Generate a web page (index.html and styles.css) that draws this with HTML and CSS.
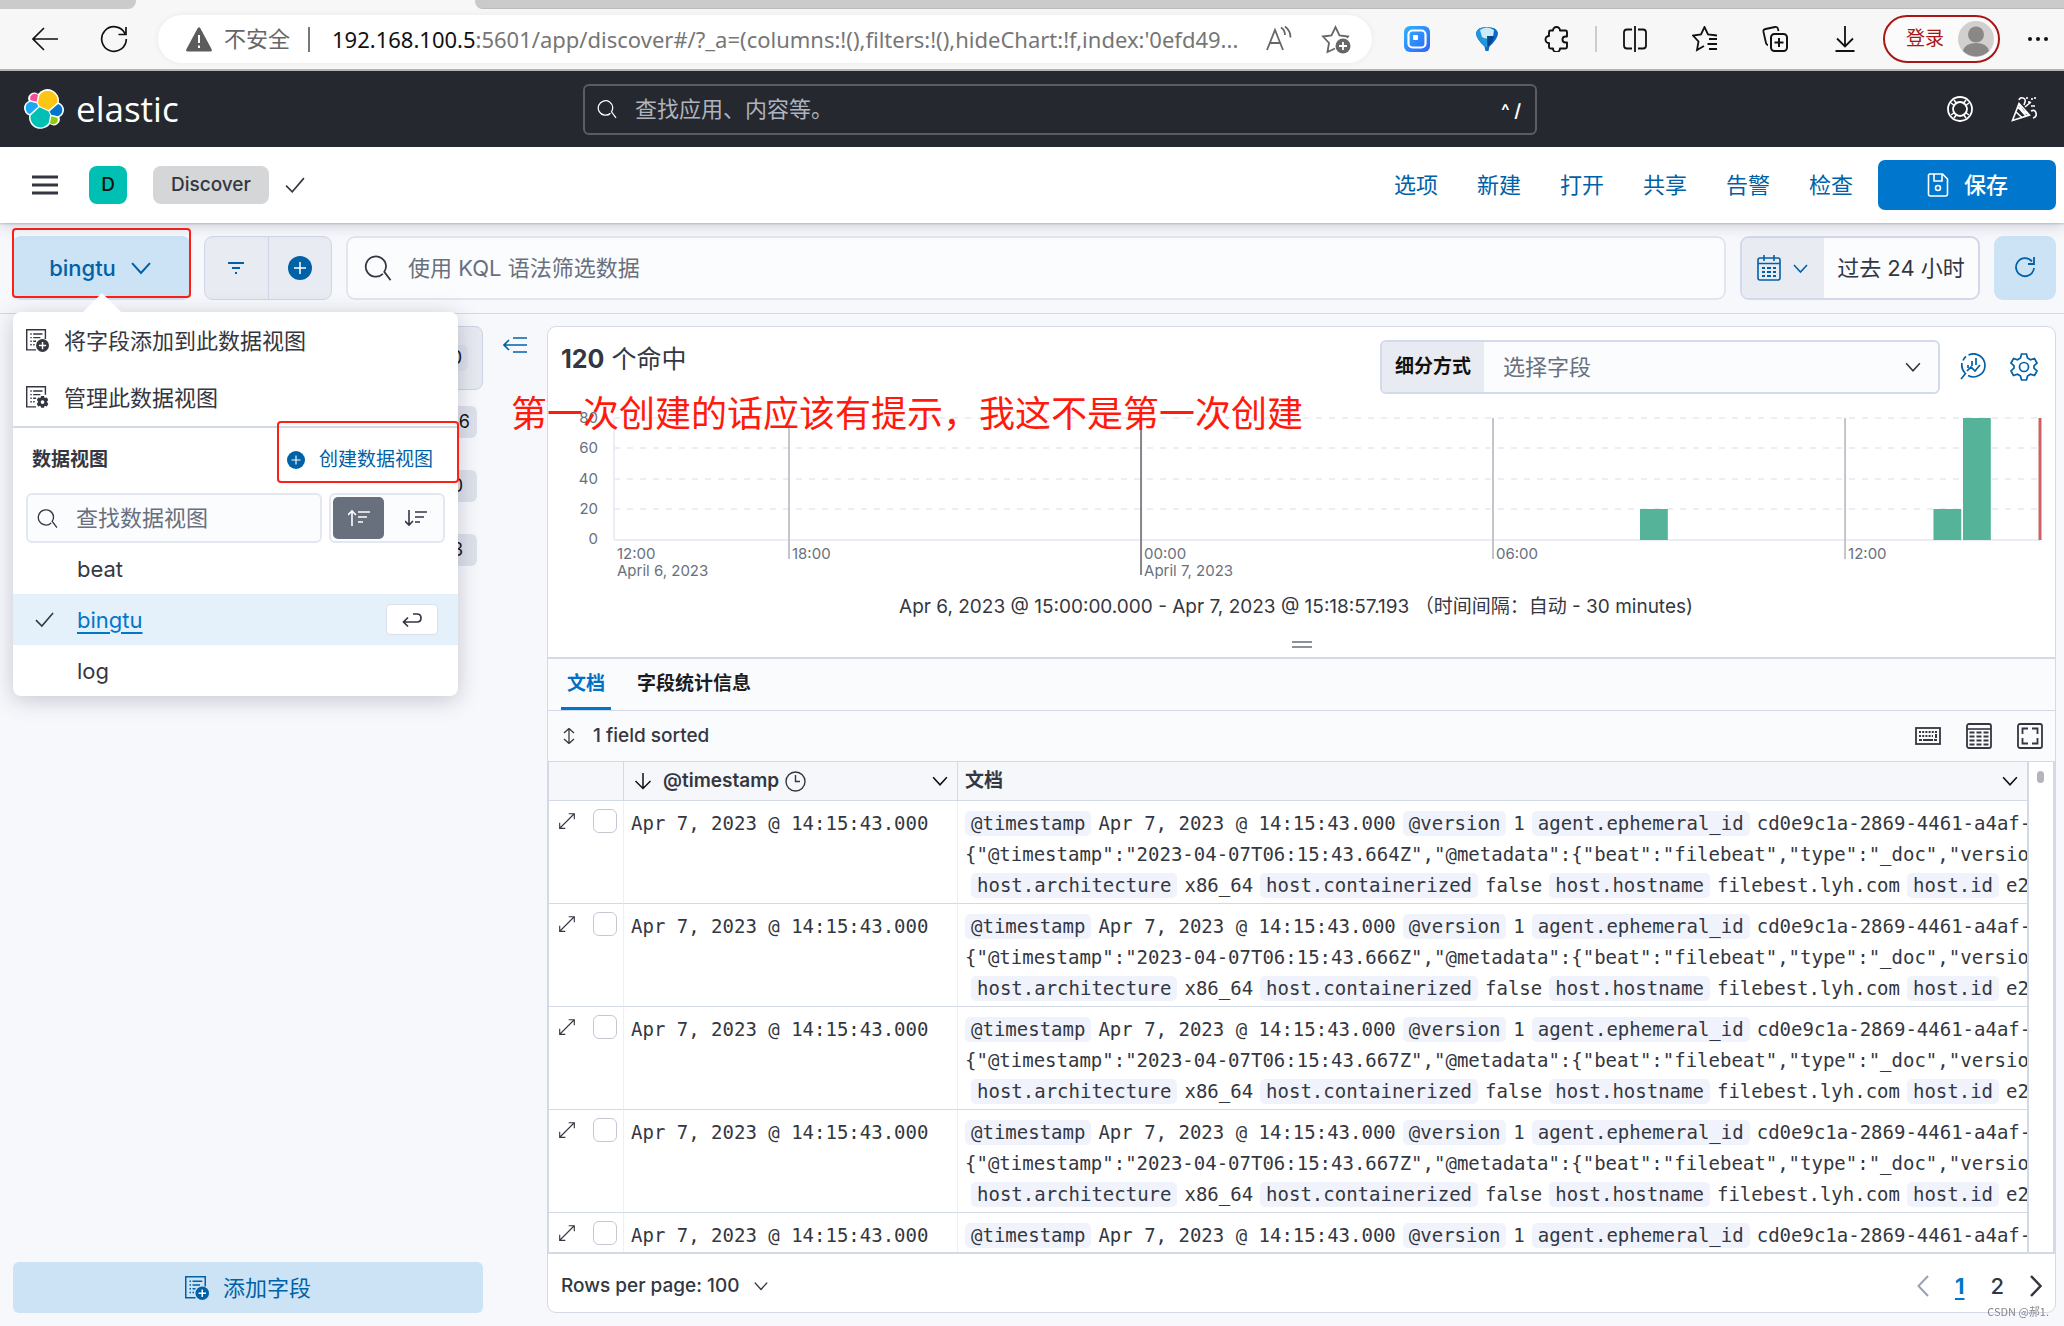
FILE: index.html
```html
<!DOCTYPE html>
<html lang="zh-CN">
<head>
<meta charset="utf-8">
<title>Discover - Elastic</title>
<link rel="stylesheet" href="styles.css">
</head>
<body>
<svg class="sprite" aria-hidden="true">
  <defs>
    <symbol id="i-search" viewBox="0 0 16 16"><path d="M10.8 11.4A5.8 5.8 0 1 1 12.6 6.8a6 6 0 0 1-1 3.4L15.2 15" fill="none" stroke="currentColor"/></symbol>
    <symbol id="i-down" viewBox="0 0 16 16"><path d="M2.5 5l5.5 6 5.5-6" fill="none" stroke="currentColor" stroke-width="1.3"/></symbol>
    <symbol id="i-check" viewBox="0 0 16 16"><path d="M1.5 8.5l4.5 4.5L14.5 3" fill="none" stroke="currentColor" stroke-width="1.2"/></symbol>
    <symbol id="i-plus" viewBox="0 0 16 16"><circle cx="8" cy="8" r="8" fill="currentColor"/><path d="M8 4v8M4 8h8" stroke="#fff" fill="none"/></symbol>
    <symbol id="i-indexadd" viewBox="0 0 16 16"><path d="M7 14.5H.5V.5h13V7M3 3.5h1M5 3.5h6.500M3 6h1M5 6h5M3 8.500h1M5 8.500h2M3 11h1M5 11h1" fill="none" stroke="currentColor"/><circle cx="11.500" cy="11.500" r="4.500" fill="currentColor"/><path d="M11.500 9v5M9 11.500h5" stroke="#fff" fill="none"/></symbol>
    <symbol id="i-indexset" viewBox="0 0 16 16"><path d="M7 14.500H.5V.5h13V6M3 3.500h1M5 3.500h6.500M3 6h1M5 6h5M3 8.500h1M5 8.500h2M3 11h1M5 11h1" fill="none" stroke="currentColor"/><path d="M10.500 7h2l.5 1.400 1.500-.4 1 1.700-1 1.300 1 1.500-1 1.700-1.500-.4-.5 1.400h-2l-.5-1.400-1.500.4-1-1.700 1-1.500-1-1.300 1-1.700 1.500.4z" fill="currentColor"/><circle cx="11.500" cy="11.200" r="1.300" fill="#fff"/></symbol>
    <symbol id="i-expand" viewBox="0 0 16 16"><path d="M2 14L14 2M9.500 1.500h5v5M1.500 9.500v5h5" fill="none" stroke="currentColor"/></symbol>
  </defs>
</svg>

<header class="browser">
  <div class="tabstrip"><span class="tab-left"></span><span class="tab-active"></span><span class="tab-right"></span></div>
  <div class="toolbar">
    <button class="tool" aria-label="后退"><svg width="26" height="26" viewBox="0 0 26 26"><path d="M26 13H1M12 2L1 13l11 11" fill="none" stroke="#111" stroke-width="1.600"/></svg></button>
    <button class="tool" aria-label="刷新"><svg width="28" height="28" viewBox="0 0 28 28"><path d="M25 8.500A12.300 12.300 0 1 0 26.300 14M26 2v7.500h-7.500" fill="none" stroke="#111" stroke-width="1.700"/></svg></button>
    <div class="address">
      <svg width="26" height="25" viewBox="0 0 26 25"><path d="M11.500 1.500q1.500-2.500 3 0L25.500 22q1 2.500-1.500 2.500H2Q-.5 24.500.5 22z" fill="#5c5c5c"/><path d="M13 8v8M13 18.500v2.500" stroke="#fff" stroke-width="2"/></svg>
      <span class="insecure">不安全</span>
      <span class="addr-sep"></span>
      <span class="url"><b>192.168.100.5</b>:5601/app/discover#/?_a=(columns:!(),filters:!(),hideChart:!f,index:'0efd49...</span>
      <button class="tool" aria-label="大声朗读"><svg width="26" height="26" viewBox="0 0 26 26" fill="none" stroke="#666" stroke-width="1.800"><path d="M1 24L9 4l8 20M4 17h10M15 1.500q4 2.500 4 7.500M19 .5q5.500 4 5.500 11"/></svg></button>
      <button class="tool" aria-label="添加到收藏夹"><svg width="30" height="30" viewBox="0 0 30 30"><path d="M14 24.500L6.500 28l1.500-9L2 12.500l8.500-1L14.500 3l4 8.500 8.500 1-1 1.500" fill="none" stroke="#666" stroke-width="1.800"/><circle cx="22" cy="22" r="7.500" fill="#666"/><path d="M22 18v8M18 22h8" stroke="#fff" stroke-width="1.800"/></svg></button>
    </div>
    <div class="tools">
      <button class="tool" aria-label="侧边扩展"><svg width="26" height="26" viewBox="0 0 26 26"><defs><linearGradient id="g-side" x1="0" y1="0" x2="1" y2="1"><stop offset="0" stop-color="#30b4fa"/><stop offset="1" stop-color="#2f62fb"/></linearGradient></defs><rect width="26" height="26" rx="6" fill="url(#g-side)"/><rect x="4.500" y="4.500" width="17" height="17" rx="4" fill="none" stroke="#fff" stroke-width="2.200"/><rect x="9" y="9" width="5" height="5" rx="1" fill="#fff"/></svg></button>
      <button class="tool" aria-label="下载扩展"><svg width="26" height="26" viewBox="0 0 26 26"><path d="M2 7q1-6 11-6t11 6q0 6-8.500 13.500L14.500 25h-3l-1-4.500Q2 13 2 7z" fill="#0a6ac4"/><path d="M2 7q1-6 11-6v21Q2 13 2 7z" fill="#1f97dd"/><path d="M6 4q7-5 14 0l-1 7q-6 3-11 0z" fill="#c9ecf8"/><path d="M13 10h7q-1 6-6 11z" fill="#06478f"/></svg></button>
      <button class="tool" aria-label="扩展"><svg width="26" height="26" viewBox="0 0 26 26"><path d="M9 4.500a3.500 3.500 0 0 1 7 0h5.500a1.500 1.500 0 0 1 1.500 1.500v4.500h-1.500a3 3 0 0 0 0 6H23V21a1.500 1.500 0 0 1-1.500 1.500H16a3.500 3.500 0 0 1-7 0H6.500A1.500 1.500 0 0 1 5 21v-4a3.500 3.500 0 0 1 0-7V6a1.500 1.500 0 0 1 1.500-1.500z" fill="none" stroke="#111" stroke-width="1.900" stroke-linejoin="round"/></svg></button>
      <span class="tools-sep"></span>
      <button class="tool" aria-label="分屏"><svg width="26" height="26" viewBox="0 0 26 26"><path d="M10 3.500H5a3 3 0 0 0-3 3v13a3 3 0 0 0 3 3h5M16 3.500h5a3 3 0 0 1 3 3v13a3 3 0 0 1-3 3h-5M13 0v26" fill="none" stroke="#111" stroke-width="1.800"/></svg></button>
      <button class="tool" aria-label="收藏夹"><svg width="26" height="26" viewBox="0 0 26 26"><path d="M12 20l-7 4 1.500-8.500L1 9.500l8-1L12.500 1 16 8.500l9 1M17 13h8M15.500 18H25M17 23h8" fill="none" stroke="#111" stroke-width="1.800"/></svg></button>
      <button class="tool" aria-label="集锦"><svg width="26" height="26" viewBox="0 0 26 26"><path d="M6 19Q4.500 19 4 17L1.500 6Q1 3.500 3.500 3L13 1q2.500-.5 3 2l.5 2" fill="none" stroke="#111" stroke-width="1.800"/><rect x="9" y="8" width="16" height="17" rx="3.500" fill="none" stroke="#111" stroke-width="2"/><path d="M17 12v9M12.500 16.500h9" stroke="#111" stroke-width="2"/></svg></button>
      <button class="tool" aria-label="下载"><svg width="26" height="26" viewBox="0 0 26 26"><path d="M13 0v20M5 12.500l8 8 8-8M3.500 25h19" fill="none" stroke="#111" stroke-width="1.800"/></svg></button>
    </div>
    <button class="login">登录<svg width="36" height="36" viewBox="0 0 36 36"><circle cx="18" cy="18" r="18" fill="#d2d0ce"/><circle cx="18" cy="13.500" r="8" fill="#8a8886"/><path d="M5 30q2-8 13-8t13 8a18 18 0 0 1-26 0z" fill="#8a8886"/></svg></button>
    <button class="tool" aria-label="更多"><svg width="22" height="6" viewBox="0 0 22 6"><circle cx="3" cy="3" r="2" fill="#111"/><circle cx="11" cy="3" r="2" fill="#111"/><circle cx="19" cy="3" r="2" fill="#111"/></svg></button>
  </div>
</header>

<header class="topbar">
  <a class="brand" href="#" aria-label="elastic">
    <svg width="40" height="40" viewBox="0 0 32 32"><path fill="#fff" d="M32 16.770a6.334 6.334 0 0 0-1.140-3.630 6.269 6.269 0 0 0-3.020-2.300 9.098 9.098 0 0 0-.87-5.830A9.050 9.050 0 0 0 22.640 1a8.990 8.990 0 0 0-11.460 2.900 4.794 4.794 0 0 0-5.850-.05 4.833 4.833 0 0 0-1.620 5.650 6.356 6.356 0 0 0-2.690 2.340A6.395 6.395 0 0 0 0 15.260a6.349 6.349 0 0 0 1.150 3.650 6.283 6.283 0 0 0 3.040 2.300 9.039 9.039 0 0 0 10.900 10.430 8.984 8.984 0 0 0 5.740-3.550 4.770 4.770 0 0 0 5.840.04 4.808 4.808 0 0 0 1.610-5.640 6.357 6.357 0 0 0 2.700-2.340A6.396 6.396 0 0 0 32 16.770"/><path fill="#FEC514" d="M12.580 13.790l7 3.210 7.060-6.210a7.849 7.849 0 0 0-4.850-8.850 7.790 7.790 0 0 0-9.520 3.170L11.100 11.200z"/><path fill="#00BFB3" d="M5.340 21.200a7.986 7.986 0 0 0 4.880 8.950 7.770 7.770 0 0 0 9.580-3.230l1.160-6.090-1.560-3-7.020-3.210z"/><path fill="#F04E98" d="M5.300 9.060l4.790 1.140 1.050-5.480a3.790 3.790 0 0 0-5.960 1.270 3.820 3.820 0 0 0 .12 3.070"/><path fill="#1BA9F5" d="M4.880 10.210A5.380 5.380 0 0 0 1.340 15.170a5.270 5.270 0 0 0 3.370 4.900l6.730-6.110-1.240-2.650z"/><path fill="#93C90E" d="M20.850 27.260a3.780 3.780 0 0 0 5.940-1.270 3.820 3.820 0 0 0-.12-3.060l-4.780-1.130z"/><path fill="#07C" d="M21.850 20.570l5.260 1.240a5.380 5.380 0 0 0 3.550-4.960 5.270 5.270 0 0 0-3.380-4.890l-6.880 6.050z"/></svg>
    <span>elastic</span>
  </a>
  <label class="global-search"><svg width="20" height="20"><use href="#i-search"/></svg><input type="text" placeholder="查找应用、内容等。" aria-label="查找应用、内容等"><kbd>^ /</kbd></label>
  <div class="top-actions">
    <button class="tool" aria-label="帮助"><svg width="26" height="26" viewBox="0 0 26 26" fill="none" stroke="#fff"><circle cx="13" cy="13" r="12" stroke-width="1.800"/><circle cx="13" cy="13" r="7" stroke-width="1.800"/><path d="M4 7l4 3M7 4l3 4M19 4l-3 4M22 7l-4 3M4 19l4-3M7 22l3-4M19 22l-3-4M22 19l-4-3" stroke-width="1.500"/></svg></button>
    <button class="tool" aria-label="新闻"><svg width="26" height="26" viewBox="0 0 26 26" fill="none" stroke="#fff" stroke-width="1.600"><path d="M8 7.500L1.500 24.500 18.500 19zM5 16l6 5.500M7 11l8 9M8 7.500q2 8 10.500 11.500M8 4q1-3 4-2t2 4l-1 3M14 11l6-5M20 15q4-2 5 2t-3 5M16 1v2M21 2v2M24 1v2M18 5v2M20 10h4" /></svg></button>
  </div>
</header>

<nav class="appbar">
  <button class="tool" aria-label="菜单"><svg width="26" height="20" viewBox="0 0 26 20"><path d="M0 2h26M0 10h26M0 18h26" stroke="#343741" stroke-width="3"/></svg></button>
  <span class="space">D</span>
  <span class="crumb">Discover</span>
  <svg class="crumb-check" width="22" height="22"><use href="#i-check"/></svg>
  <div class="menu">
    <a href="#">选项</a><a href="#">新建</a><a href="#">打开</a><a href="#">共享</a><a href="#">告警</a><a href="#">检查</a>
  </div>
  <button class="save"><svg width="24" height="24" viewBox="0 0 24 24" fill="none" stroke="#fff" stroke-width="1.600"><path d="M3.500 1h13l5 5v15q0 2-2 2h-15q-2 0-2-2V2zM8 1v7h8V1"/><circle cx="12" cy="15" r="2.500"/></svg>保存</button>
</nav>

<section class="querybar">
  <div class="dataview">
    <button class="dataview-btn">bingtu<svg width="26" height="26"><use href="#i-down"/></svg></button>
    <span class="mark mark-button"></span>
    <div class="popover">
      <button class="pop-item"><svg width="23" height="23"><use href="#i-indexadd"/></svg>将字段添加到此数据视图</button>
      <button class="pop-item"><svg width="23" height="23"><use href="#i-indexset"/></svg>管理此数据视图</button>
      <div class="pop-head">
        <strong>数据视图</strong>
        <a href="#"><svg width="18" height="18"><use href="#i-plus"/></svg>创建数据视图</a>
        <span class="mark mark-create"></span>
      </div>
      <div class="pop-search">
        <label><svg width="21" height="21"><use href="#i-search"/></svg><input type="text" placeholder="查找数据视图" aria-label="查找数据视图"></label>
        <div class="sort">
          <button class="on" aria-label="升序"><svg width="22" height="18" viewBox="0 0 22 18" fill="none" stroke="currentColor" stroke-width="1.600"><path d="M4 17V2M0 6l4-4 4 4M10 3h12M10 8h9M10 13h5"/></svg></button>
          <button aria-label="降序"><svg width="22" height="18" viewBox="0 0 22 18" fill="none" stroke="currentColor" stroke-width="1.600"><path d="M4 1v15M0 12l4 4 4-4M10 3h12M10 8h9M10 13h5"/></svg></button>
        </div>
      </div>
      <ul class="views">
        <li>beat</li>
        <li class="selected"><svg width="21" height="21"><use href="#i-check"/></svg><a href="#">bingtu</a><span class="enter"><svg width="20" height="16" viewBox="0 0 20 16" fill="none" stroke="#343741" stroke-width="1.700"><path d="M11 2h4q4 0 4 4t-4 4H2M6 5.500L1.500 10 6 14.500"/></svg></span></li>
        <li>log</li>
      </ul>
    </div>
  </div>
  <div class="filters">
    <button aria-label="筛选"><svg width="18" height="14" viewBox="0 0 18 14"><path d="M1 2h16M5 7h8M8 12h2" stroke="#0061a6" stroke-width="2"/></svg></button>
    <button aria-label="添加筛选"><svg width="24" height="24"><use href="#i-plus"/></svg></button>
  </div>
  <label class="query"><svg width="28" height="28"><use href="#i-search"/></svg><input type="text" placeholder="使用 KQL 语法筛选数据" aria-label="查询"></label>
  <div class="daterange">
    <button class="quick" aria-label="快速选择"><svg width="24" height="26" viewBox="0 0 24 26" fill="none" stroke="#0061a6"><rect x="1" y="3" width="22" height="22" rx="2" stroke-width="1.600"/><path d="M1 8.500h22M7 0v6M17 0v6" stroke-width="1.600"/><path d="M5 13h3M10 13h4M16 13h3M5 17h3M10 17h4M16 17h3M5 21h3M10 21h4M16 21h3" stroke-width="2"/></svg><svg width="19" height="19"><use href="#i-down"/></svg></button>
    <button class="range">过去 24 小时</button>
  </div>
  <button class="refresh" aria-label="刷新"><svg width="22" height="22" viewBox="0 0 22 22"><path d="M18 4.500A9 9 0 1 0 20 11M20 0v7h-6" fill="none" stroke="#0061a6" stroke-width="1.800"/></svg></button>
</section>

<main class="discover">
  <aside class="sidebar">
    <div class="field-filter"><span>0</span></div>
    <ul class="counts">
      <li><span class="wide">6</span></li>
      <li><span>0</span></li>
      <li><span>3</span></li>
    </ul>
    <button class="add-field"><svg width="24" height="24"><use href="#i-indexadd"/></svg>添加字段</button>
  </aside>
  <div class="collapse"><button class="tool" aria-label="折叠侧边栏"><svg width="24" height="16" viewBox="0 0 24 16" fill="none" stroke="#0061a6" stroke-width="1.600"><path d="M10 1h14M1 8h23M10 15h14M6 3L1 8l5 5"/></svg></button></div>

  <section class="panel">
    <div class="histogram">
      <div class="hits">
        <h2><b>120</b> 个命中</h2>
        <div class="breakdown"><label for="field">细分方式</label><select id="field"><option>选择字段</option></select><svg width="20" height="20"><use href="#i-down"/></svg></div>
        <button class="tool" aria-label="在 Lens 中编辑"><svg width="26" height="28" viewBox="0 0 26 28" fill="none" stroke="#0061a6" stroke-width="1.700"><path d="M5 20A11.500 11.500 0 0 1 2 10M3 7.500q1-2.500 3-4M8.500 2A11.500 11.500 0 1 1 8 22.500M6 20l-5 6M8 15v-3M12 13V8M16 12V5M7 18l4-4 4 4 5-6"/></svg></button>
        <button class="tool" aria-label="图表选项"><svg width="28" height="28" viewBox="0 0 28 28" fill="none" stroke="#0061a6" stroke-width="1.700"><path d="M11.500 1h5l1 4 3 1.800 4-1.300 2.500 4.500-3 2.800v2.400l3 2.800-2.500 4.500-4-1.300-3 1.800-1 4h-5l-1-4-3-1.800-4 1.300L1 18l3-2.800v-2.400L1 10l2.500-4.500 4 1.300 3-1.800z"/><circle cx="14" cy="14" r="4.500"/></svg></button>
      </div>
      <div class="chart">
        <svg class="yaxis" width="50" height="190"><text x="50" y="29">80</text><text x="50" y="59">60</text><text x="50" y="90">40</text><text x="50" y="120">20</text><text x="50" y="150">0</text></svg>
        <svg class="plot" height="190">
          <g class="grid"><line x1="0" x2="100%" y1="24" y2="24"/><line x1="0" x2="100%" y1="54" y2="54"/><line x1="0" x2="100%" y1="85" y2="85"/><line x1="0" x2="100%" y1="115" y2="115"/></g>
          <line class="axis" x1="0" x2="100%" y1="146" y2="146"/><line class="axis" x1="0" x2="0" y1="24" y2="146"/>
          <g class="ticks"><line x1="12.270%" x2="12.270%" y1="24" y2="165"/><line class="day" x1="36.960%" x2="36.960%" y1="24" y2="181"/><line x1="61.640%" x2="61.640%" y1="24" y2="165"/><line x1="86.330%" x2="86.330%" y1="24" y2="165"/></g>
          <g class="bars"><rect x="71.950%" y="115" width="1.950%" height="31"/><rect x="92.530%" y="115" width="1.950%" height="31"/><rect x="94.600%" y="24" width="1.950%" height="122"/></g>
          <line class="now" x1="100%" x2="100%" y1="24" y2="146"/>
          <g class="labels"><text x="0" y="165">12:00</text><text x="0" y="182">April 6, 2023</text><text x="12.270%" y="165">18:00</text><text x="36.960%" y="165">00:00</text><text x="36.960%" y="182">April 7, 2023</text><text x="61.640%" y="165">06:00</text><text x="86.330%" y="165">12:00</text></g>
        </svg>
      </div>
      <p class="interval">Apr 6, 2023 @ 15:00:00.000 - Apr 7, 2023 @ 15:18:57.193 （时间间隔：自动 - 30 minutes)</p>
      <div class="resizer"><span></span></div>
      <p class="note">第一次创建的话应该有提示，我这不是第一次创建</p>
    </div>

    <div class="tabs"><button class="active">文档</button><button>字段统计信息</button></div>
    <div class="grid-tools">
      <button class="sorted"><svg width="14" height="16" viewBox="0 0 14 16" fill="none" stroke="currentColor" stroke-width="1.300"><path d="M7 1v14M2 5l5-4.500L12 5M2 11l5 4.500 5-4.500"/></svg>1 field sorted</button>
      <button class="tool" aria-label="键盘快捷键"><svg width="26" height="18" viewBox="0 0 26 18"><rect x="1" y="1" width="24" height="16" fill="none" stroke="#343741" stroke-width="1.800"/><path d="M4 5h18M4 9h14" stroke="#343741" stroke-width="2.200" stroke-dasharray="2 1.200"/><path d="M4 13h3M8 13h10M19 13h3M21 7v4" stroke="#343741" stroke-width="2"/></svg></button>
      <button class="tool" aria-label="显示选项"><svg width="26" height="26" viewBox="0 0 26 26" fill="none" stroke="#343741"><rect x="1" y="1" width="24" height="24" rx="2" stroke-width="1.800"/><path d="M1 6h24" stroke-width="1.600"/><path d="M3.500 9.500h5M10.500 9.500h5M17.500 9.500h5M3.500 13.500h5M10.500 13.500h5M17.500 13.500h5M3.500 17.500h5M10.500 17.500h5M17.500 17.500h5M3.500 21.500h5M10.500 21.500h5M17.500 21.500h5" stroke-width="2"/></svg></button>
      <button class="tool" aria-label="全屏"><svg width="26" height="26" viewBox="0 0 26 26" fill="none" stroke="#343741" stroke-width="1.800"><rect x="1" y="1" width="24" height="24" rx="2"/><path d="M5.500 11V5.500H11M15 5.500h5.500V11M20.500 15v5.500H15M11 20.500H5.500V15"/></svg></button>
    </div>

    <div class="grid-area">
      <div class="grid-body">
        <table>
          <colgroup><col class="c-ctl"><col class="c-time"><col></colgroup>
          <thead><tr>
            <th></th>
            <th><div class="th"><svg class="sort-arrow" width="18" height="18" viewBox="0 0 18 18" fill="none" stroke="#111" stroke-width="1.500"><path d="M9 1v15M1.500 9L9 16.500 16.500 9"/></svg>@timestamp<svg width="21" height="21" viewBox="0 0 21 21" fill="none" stroke="#343741" stroke-width="1.400"><circle cx="10.500" cy="10.500" r="9.500"/><path d="M10.500 4v6.500H15"/></svg><svg class="more" width="20" height="20"><use href="#i-down"/></svg></div></th>
            <th><div class="th">文档<svg class="more" width="20" height="20"><use href="#i-down"/></svg></div></th>
          </tr></thead>
          <tbody>
            <tr>
              <td><div class="ctl"><button class="tool" aria-label="展开"><svg width="18" height="18"><use href="#i-expand"/></svg></button><input type="checkbox" aria-label="选择行"></div></td>
              <td>Apr 7, 2023 @ 14:15:43.000</td>
              <td><div class="doc"><b>@timestamp</b><span>Apr 7, 2023 @ 14:15:43.000</span><b>@version</b><span>1</span><b>agent.ephemeral_id</b><span>cd0e9c1a-2869-4461-a4af-</span></div><div class="doc">{"@timestamp":"2023-04-07T06:15:43.664Z","@metadata":{"beat":"filebeat","type":"_doc","versio</div><div class="doc inset"><b>host.architecture</b><span>x86_64</span><b>host.containerized</b><span>false</span><b>host.hostname</b><span>filebest.lyh.com</span><b>host.id</b><span>e2</span></div></td>
            </tr>
            <tr>
              <td><div class="ctl"><button class="tool" aria-label="展开"><svg width="18" height="18"><use href="#i-expand"/></svg></button><input type="checkbox" aria-label="选择行"></div></td>
              <td>Apr 7, 2023 @ 14:15:43.000</td>
              <td><div class="doc"><b>@timestamp</b><span>Apr 7, 2023 @ 14:15:43.000</span><b>@version</b><span>1</span><b>agent.ephemeral_id</b><span>cd0e9c1a-2869-4461-a4af-</span></div><div class="doc">{"@timestamp":"2023-04-07T06:15:43.666Z","@metadata":{"beat":"filebeat","type":"_doc","versio</div><div class="doc inset"><b>host.architecture</b><span>x86_64</span><b>host.containerized</b><span>false</span><b>host.hostname</b><span>filebest.lyh.com</span><b>host.id</b><span>e2</span></div></td>
            </tr>
            <tr>
              <td><div class="ctl"><button class="tool" aria-label="展开"><svg width="18" height="18"><use href="#i-expand"/></svg></button><input type="checkbox" aria-label="选择行"></div></td>
              <td>Apr 7, 2023 @ 14:15:43.000</td>
              <td><div class="doc"><b>@timestamp</b><span>Apr 7, 2023 @ 14:15:43.000</span><b>@version</b><span>1</span><b>agent.ephemeral_id</b><span>cd0e9c1a-2869-4461-a4af-</span></div><div class="doc">{"@timestamp":"2023-04-07T06:15:43.667Z","@metadata":{"beat":"filebeat","type":"_doc","versio</div><div class="doc inset"><b>host.architecture</b><span>x86_64</span><b>host.containerized</b><span>false</span><b>host.hostname</b><span>filebest.lyh.com</span><b>host.id</b><span>e2</span></div></td>
            </tr>
            <tr>
              <td><div class="ctl"><button class="tool" aria-label="展开"><svg width="18" height="18"><use href="#i-expand"/></svg></button><input type="checkbox" aria-label="选择行"></div></td>
              <td>Apr 7, 2023 @ 14:15:43.000</td>
              <td><div class="doc"><b>@timestamp</b><span>Apr 7, 2023 @ 14:15:43.000</span><b>@version</b><span>1</span><b>agent.ephemeral_id</b><span>cd0e9c1a-2869-4461-a4af-</span></div><div class="doc">{"@timestamp":"2023-04-07T06:15:43.667Z","@metadata":{"beat":"filebeat","type":"_doc","versio</div><div class="doc inset"><b>host.architecture</b><span>x86_64</span><b>host.containerized</b><span>false</span><b>host.hostname</b><span>filebest.lyh.com</span><b>host.id</b><span>e2</span></div></td>
            </tr>
            <tr>
              <td><div class="ctl"><button class="tool" aria-label="展开"><svg width="18" height="18"><use href="#i-expand"/></svg></button><input type="checkbox" aria-label="选择行"></div></td>
              <td>Apr 7, 2023 @ 14:15:43.000</td>
              <td><div class="doc"><b>@timestamp</b><span>Apr 7, 2023 @ 14:15:43.000</span><b>@version</b><span>1</span><b>agent.ephemeral_id</b><span>cd0e9c1a-2869-4461-a4af-</span></div></td>
            </tr>
          </tbody>
        </table>
      </div>
      <div class="gutter"><span></span></div>
    </div>

    <footer class="pager">
      <button class="per-page">Rows per page: 100<svg width="18" height="18"><use href="#i-down"/></svg></button>
      <div class="pages">
        <button class="tool prev" aria-label="上一页"><svg width="12" height="22" viewBox="0 0 12 22"><path d="M11 1L1.500 11 11 21" fill="none" stroke="#98a2b3" stroke-width="2"/></svg></button>
        <a class="current" href="#">1</a><a href="#">2</a>
        <button class="tool" aria-label="下一页"><svg width="12" height="22" viewBox="0 0 12 22"><path d="M1 1l9.500 10L1 21" fill="none" stroke="#343741" stroke-width="2.500"/></svg></button>
      </div>
    </footer>
  </section>
</main>
<span class="watermark">CSDN @郝1.</span>
</body>
</html>
```
FILE: styles.css
```css
* { box-sizing: border-box; }
body {
  margin: 0;
  height: 100vh;
  display: flex;
  flex-direction: column;
  overflow: hidden;
  background: #f7f8fc;
  color: #343741;
  font: 22px/32px Inter, "Noto Sans CJK SC", sans-serif;
}
button, input, select { font: inherit; color: inherit; }
button { border: 0; padding: 0; background: none; display: flex; align-items: center; justify-content: center; }
input { border: 0; padding: 0; background: none; outline: 0; min-width: 0; flex: 1; }
input::placeholder { color: #69707d; opacity: 1; }
a { color: #0061a6; text-decoration: none; }
ul { list-style: none; margin: 0; padding: 0; }
p, h2 { margin: 0; }
svg { display: block; flex: none; }
.sprite { position: absolute; width: 0; height: 0; }

/* Browser chrome */
.browser { background: #f7f7f7; border-bottom: 2px solid #b4b4b4; }
.tabstrip { display: flex; height: 9px; }
.tab-left { width: 136px; background: #cbcbcb; border-radius: 0 0 8px 0; }
.tab-active { width: 339px; }
.tab-right { flex: 1; background: #cbcbcb; border-radius: 0 0 0 8px; border-bottom: 1px solid #bbb; }
.toolbar { display: flex; align-items: center; height: 60px; padding: 0 15px 0 32px; }
.toolbar > .tool:nth-child(2) { margin: 0 30px 0 42px; }
.address { flex: 1; min-width: 0; height: 48px; display: flex; align-items: center; padding: 0 21px 0 28px; background: #fff; border-radius: 24px; box-shadow: 0 0 6px rgba(0, 0, 0, .06); }
.insecure { margin-left: 12px; color: #666; white-space: nowrap; }
.addr-sep { width: 2px; height: 25px; margin: 0 22px 0 18px; background: #777; }
.url { flex: 1; overflow: hidden; white-space: nowrap; color: #767676; font-family: "Noto Sans", sans-serif; }
.url b { color: #111; font-weight: 400; }
.address .tool:last-child { margin-left: 29px; }
.tools { display: flex; align-items: center; gap: 44px; margin: 0 25px 0 32px; }
.tools-sep { width: 2px; height: 26px; margin: 0 -19px; background: #ccc; }
.login { height: 48px; padding: 0 4px 0 21px; gap: 14px; margin-right: 27px; border: 2px solid #a81616; border-radius: 24px; color: #a81616; font-size: 19px; background: #fbfbfb; }

/* Elastic header */
.topbar { height: 76px; display: grid; grid-template-columns: 1fr 954px 500px; align-items: center; padding: 0 27px 0 24px; background: #25282f; color: #fff; }
.brand { display: flex; align-items: center; gap: 12px; color: #fff; font: 35px/44px "Open Sans", sans-serif; }
.global-search { display: flex; align-items: center; height: 51px; padding: 0 14px 0 12px; gap: 18px; border: 2px solid #5a5d66; border-radius: 6px; }
.global-search input::placeholder { color: #aeb3bd; }
.global-search kbd { padding-top: 4px; font: 600 18px/24px Inter, sans-serif; }
.top-actions { display: flex; justify-content: flex-end; gap: 38px; }

/* Application bar */
.appbar { position: relative; z-index: 2; display: flex; align-items: center; height: 76px; padding: 0 8px 0 32px; background: #fff; box-shadow: 0 1px 2px rgba(50, 55, 80, .25), 0 3px 14px rgba(50, 55, 80, .2); }
.space { width: 38px; height: 38px; margin: 0 26px 0 31px; border-radius: 8px; background: #00bfb3; color: #111; font-size: 19px; line-height: 38px; text-align: center; font-weight: 500; }
.crumb { height: 38px; padding: 0 18px; margin-right: 15px; border-radius: 8px; background: #d5d6d8; font-size: 19px; line-height: 38px; font-weight: 500; }
.menu { display: flex; gap: 39px; margin-left: auto; margin-right: 25px; }
.save { width: 178px; height: 50px; gap: 14px; border-radius: 7px; background: #0077cc; color: #fff; font-weight: 500; }

/* Query bar */
.querybar { position: relative; z-index: 1; display: flex; gap: 14px; padding: 13px 8px 13px 13px; border-bottom: 1px solid #d3d9e8; }
.querybar > *, .dataview-btn { height: 64px; }
.dataview { position: relative; }
.dataview-btn { width: 177px; gap: 12px; border-radius: 8px; background: #cce3f5; color: #0061a6; font-weight: 500; }
.mark { position: absolute; border: 2px solid #ff2015; border-radius: 4px; }
.mark-button { inset: -8px -1px 2px -1px; }
.filters { display: flex; width: 128px; border: 1px solid #cfd6e8; border-radius: 9px; background: #e9ebf3; color: #0061a6; }
.filters button { flex: 1; }
.filters button + button { border-left: 1px solid #cfd6e8; }
.query { flex: 1; display: flex; align-items: center; gap: 16px; padding: 0 16px; border: 2px solid #e3e6f1; border-radius: 9px; background: #fbfcfe; }
.daterange { display: flex; width: 240px; border: 2px solid #d3d8ea; border-radius: 9px; overflow: hidden; background: #fbfcfe; }
.quick { width: 82px; gap: 10px; background: #e9ebf3; color: #0061a6; }
.range { flex: 1; white-space: nowrap; }
.refresh { width: 62px; border-radius: 9px; background: #cce3f5; }

/* Data view popover */
.popover { position: absolute; top: 76px; left: 0; width: 445px; border-radius: 8px; background: #fff; box-shadow: 0 4px 22px rgba(50, 55, 80, .25); }
.popover::before { content: ""; position: absolute; left: 70px; top: -19px; border: solid transparent; border-width: 0 19px 19px; border-bottom-color: #fff; }
.pop-item { width: 100%; height: 57px; padding: 0 13px; gap: 15px; justify-content: flex-start; }
.pop-head { position: relative; display: flex; align-items: center; justify-content: space-between; height: 67px; padding: 0 25px 2px 19px; border-top: 2px solid #d3dae6; font-size: 19px; }
.pop-head a { display: flex; align-items: center; gap: 14px; }
.mark-create { inset: -7px -1px 10px 264px; }
.pop-search { display: flex; gap: 7px; padding: 0 13px; }
.pop-search label { flex: 1; min-width: 0; display: flex; align-items: center; gap: 18px; height: 50px; padding: 0 9px; border: 2px solid #e3e7f1; border-radius: 6px; background: #fbfcfe; }
.sort { display: flex; gap: 6px; width: 116px; padding: 2px; border: 2px solid #e3e7f1; border-radius: 6px; background: #fbfcfe; }
.sort button { flex: none; width: 51px; border-radius: 5px; }
.sort .on { background: #69707d; color: #fff; }
.views li { display: flex; align-items: center; height: 51px; padding-left: 64px; }
.views .selected { padding: 0 20px 0 21px; gap: 22px; background: #e4f0fa; }
.views .selected a { color: #0077cc; text-decoration: underline; text-underline-offset: 4px; }
.enter { display: flex; align-items: center; justify-content: center; width: 52px; height: 31px; margin-left: auto; border: 1px solid #d9dfea; border-radius: 4px; background: #fff; }

/* Discover body */
.discover { flex: 1; min-height: 0; display: flex; padding: 12px 8px 13px 13px; }
.sidebar { width: 470px; display: flex; flex-direction: column; flex: none; }
.field-filter { height: 64px; display: flex; align-items: center; justify-content: flex-end; padding-right: 14px; border: 1px solid #cbd3e6; border-radius: 8px; background: #e6e9f0; }
.field-filter span { padding: 0 6px; border-radius: 5px; background: #dde1ea; color: #111; font-size: 18px; line-height: 26px; }
.counts li { display: flex; align-items: center; justify-content: flex-end; height: 64px; padding-right: 6px; }
.counts span { padding: 0 14px; border-radius: 6px; background: #dde1ea; color: #111; font-size: 18px; }
.counts .wide { padding: 0 7px; }
.add-field { height: 51px; margin-top: auto; gap: 14px; border-radius: 6px; background: #cce3f5; color: #0061a6; }
.collapse { width: 64px; flex: none; padding: 11px 20px; }
.panel { flex: 1; min-width: 0; display: flex; flex-direction: column; border: 1px solid #d3dae6; border-radius: 9px; background: #fff; }

/* Histogram */
.histogram { position: relative; border-bottom: 2px solid #d3dae6; }
.hits { display: flex; align-items: center; padding: 13px 17px 0 13px; }
.hits h2 { align-self: flex-start; margin-right: auto; font-size: 25px; line-height: 38px; font-weight: 400; }
.hits .tool { margin-left: 20px; }
.hits .tool:last-child { margin-left: 24px; }
.breakdown { display: flex; align-items: center; width: 560px; height: 54px; border: 2px solid #d3daea; border-radius: 6px; background: #fbfcfe; overflow: hidden; }
.breakdown label { align-self: stretch; padding: 0 13px; background: #e9ebf3; color: #111; font-size: 19px; line-height: 50px; font-weight: 700; }
.breakdown select { flex: 1; appearance: none; border: 0; padding: 0 19px; background: none; color: #69707d; }
.breakdown svg { margin-right: 15px; }
.chart { display: flex; gap: 16px; padding-right: 15px; }
.chart svg { overflow: visible; font-size: 15px; fill: #69707d; }
.yaxis text { text-anchor: end; }
.plot { flex: 1; min-width: 0; }
.grid line { stroke: #ebeef4; stroke-width: 2; stroke-dasharray: 6 7; }
.axis { stroke: #eaedf3; stroke-width: 2; }
.ticks line { stroke: #c4c5c8; stroke-width: 2; }
.ticks .day { stroke: #858589; }
.bars { fill: #54b399; }
.now { stroke: #cc6362; stroke-width: 3; }
.labels { transform: translateX(3px); }
.interval { padding-right: 11px; font-size: 19px; line-height: 46px; text-align: center; }
.resizer { display: flex; justify-content: center; height: 27px; padding-top: 11px; }
.resizer span { width: 20px; height: 7px; border: solid #8b909a; border-width: 2px 0; }
.note { position: absolute; left: -37px; top: 57px; font: 36px/54px "Noto Sans CJK SC", sans-serif; color: #ff1a0d; white-space: nowrap; }

/* Document tabs */
.tabs { display: flex; gap: 20px; padding: 0 13px; background: #fafbfd; border-bottom: 1px solid #d3dae6; font-size: 19px; font-weight: 700; }
.tabs button { height: 51px; padding: 2px 6px 0; border-bottom: 3px solid transparent; color: #1a1c21; }
.tabs .active { color: #0071c2; border-color: #0077cc; }
.grid-tools { display: flex; align-items: center; gap: 25px; height: 51px; padding: 0 12px 0 14px; background: #fafbfd; border-bottom: 1px solid #d3dae6; }
.sorted { margin-right: auto; gap: 17px; font-size: 19px; font-weight: 500; }

/* Document grid */
.grid-area { flex: 1; min-height: 0; display: flex; border-bottom: 2px solid #d3dae6; border-left: 1px solid #d3dae6; }
.grid-body { flex: 1; min-width: 0; overflow: hidden; border-right: 2px solid #d3dae6; }
.gutter { width: 26px; border-right: 2px solid #d3dae6; padding: 9px 8px; }
.gutter span { display: block; width: 7px; height: 12px; border-radius: 4px; background: #b3b5bb; }
table { width: 100%; table-layout: fixed; border-collapse: separate; border-spacing: 0; }
.c-ctl { width: 75px; }
.c-time { width: 334px; }
th { height: 39px; padding: 0 7px; background: #f5f7fb; border-bottom: 1px solid #d3dae6; border-right: 1px solid #d3dae6; font-size: 19px; font-weight: 600; text-align: left; }
th:last-child, td:last-child { border-right: 0; }
.th { display: flex; align-items: center; gap: 6px; }
.sort-arrow { margin: 0 5px 0 3px; }
.th .more { margin-left: auto; color: #111; }
td { padding: 7px 7px 2px; border-bottom: 1px solid #d3dae6; border-right: 1px solid #eceff5; vertical-align: top; overflow: hidden; white-space: nowrap; font: 19px/31px "DejaVu Sans Mono", monospace; }
td:first-child { padding-left: 9px; }
td:last-child { padding-right: 0; }
.ctl { display: flex; align-items: center; gap: 17px; height: 25px; }
.ctl input { appearance: none; flex: none; width: 24px; height: 24px; margin: 0; border: 1px solid #c3c8d2; border-radius: 6px; background: #fff; }
.doc { display: flex; align-items: center; gap: 7px; height: 31px; }
.doc b { padding: 0 6px; border-radius: 5px; background: #f0f3fb; font-weight: 400; line-height: 25px; }
.doc.inset { padding-left: 6px; }

/* Footer */
.pager { display: flex; align-items: center; justify-content: space-between; height: 58px; padding: 6px 13px 0; }
.per-page { gap: 13px; font-size: 19px; font-weight: 500; }
.pages { display: flex; align-items: center; gap: 26px; }
.pages a { color: #343741; font-weight: 500; }
.pages .current { color: #0077cc; font-weight: 700; text-decoration: underline; text-underline-offset: 4px; }
.watermark { position: fixed; right: 15px; bottom: 8px; font: 11px/14px "Noto Sans CJK SC", sans-serif; color: #85888e; }
```
